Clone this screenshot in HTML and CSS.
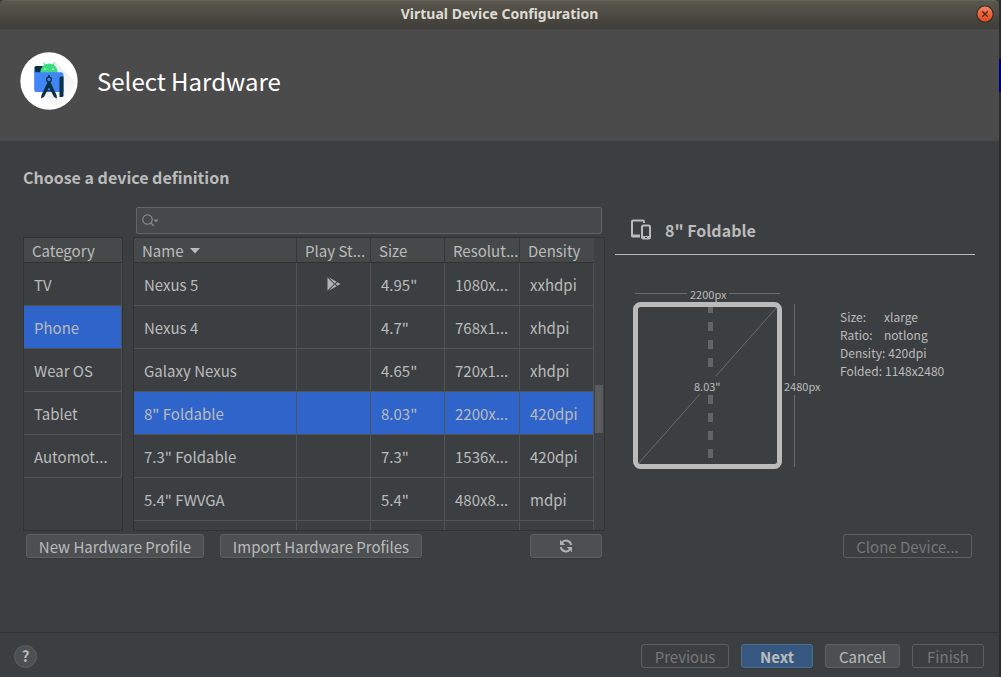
FILE: index.html
```html
<!DOCTYPE html>
<html lang="en">
<head>
<meta charset="utf-8">
<title>Virtual Device Configuration</title>
<link rel="stylesheet" href="styles.css">
</head>
<body>
<div class="desktop">
  <div class="window">
    <header class="titlebar">
      <h1 class="titlebar-text">Virtual Device Configuration</h1>
      <button class="close" type="button" aria-label="Close">
        <svg width="18" height="18" viewBox="0 0 18 18">
          <defs><linearGradient id="closeFill" x1="0" y1="0" x2="0" y2="1"><stop offset="0" stop-color="#f58a6c"/><stop offset=".5" stop-color="#ee6138"/><stop offset="1" stop-color="#e04a1a"/></linearGradient></defs>
          <circle cx="9" cy="9" r="8.2" fill="url(#closeFill)" stroke="#35322c" stroke-width="1.2"/>
          <path d="M6.2 6.2l5.6 5.6M11.8 6.2l-5.6 5.6" stroke="#4d2a1c" stroke-width="1.3"/>
        </svg>
      </button>
    </header>

    <div class="banner">
      <svg class="logo" width="58" height="58" viewBox="0 0 58 58" aria-hidden="true">
        <defs><linearGradient id="shade" x1="0" y1="0" x2="1" y2="1"><stop offset="0" stop-color="#d8d8d8"/><stop offset="1" stop-color="#fff"/></linearGradient></defs>
        <circle cx="29" cy="29" r="28.7" fill="#fff"/>
        <path d="M35 10l20 19a29 29 0 0 1-20 26L22 42z" fill="url(#shade)" opacity=".7"/>
        <path d="M16 14h8v8h-9.500v-6.500q0-1.500 1.500-1.500z" fill="#073042"/>
        <path d="M20 21q1-9 9-9.500q8 .5 9 9.500z" fill="#3ddc84"/>
        <path d="M25.300 14l-1.800-3.600M32.700 14l1.800-3.600" stroke="#3ddc84" stroke-width="1"/>
        <circle cx="25" cy="17.300" r=".8" fill="#fff"/><circle cx="33" cy="17.300" r=".8" fill="#fff"/>
        <path d="M14.200 17.500q.5 2.500 3 2.700H41q2.500.2 2.500 3V40H16q-1.800 0-1.800-2z" fill="#4285f4"/>
        <path d="M39.500 26q0-1.500 1.700-1.500h2.300V43.500q0 1.500-1.700 1.500h-2.300z" fill="#073042"/>
        <path d="M28 30.500l-6 13-.2 2 1.700-1L29 34l5.500 10.500 1.700 1-.2-2-6-13z" fill="#073042" stroke="#073042" stroke-width="1.200"/>
        <path d="M26 38q3 2 6 0" fill="none" stroke="#073042" stroke-width="1.200"/>
        <circle cx="29" cy="27.500" r="2.400" fill="#4285f4" stroke="#073042" stroke-width="1.300"/>
        <path d="M29 23v2.500" stroke="#073042" stroke-width="1.600"/>
      </svg>
      <h2 class="banner-title">Select Hardware</h2>
    </div>

    <main class="content">
      <h3 class="section-title">Choose a device definition</h3>
      <div class="columns">
        <section class="chooser">
          <div class="search">
            <svg width="18" height="14" viewBox="0 0 18 14" aria-hidden="true">
              <circle cx="5.500" cy="5.500" r="4.700" fill="none" stroke="#80898f" stroke-width="1.200"/>
              <path d="M8.700 8.700l3 3" stroke="#80898f" stroke-width="1.600"/>
              <path d="M11.500 5.500h5l-2.500 3z" fill="#80898f"/>
            </svg>
            <input class="search-input" type="text" aria-label="Search devices">
          </div>
          <div class="tables">
            <div class="pane category">
              <table class="grid">
                <thead><tr><th>Category</th></tr></thead>
                <tbody>
                  <tr><td>TV</td></tr>
                  <tr class="selected"><td>Phone</td></tr>
                  <tr><td>Wear OS</td></tr>
                  <tr><td>Tablet</td></tr>
                  <tr><td>Automot...</td></tr>
                </tbody>
              </table>
            </div>
            <div class="pane devices">
              <table class="grid">
                <colgroup><col><col class="c-play"><col class="c-size"><col class="c-res"><col class="c-den"></colgroup>
                <thead><tr>
                  <th>Name <svg class="sort" width="10" height="6" viewBox="0 0 10 6" aria-hidden="true"><path d="M0 0h10L5 5.500z" fill="#bbb"/></svg></th>
                  <th>Play St...</th><th>Size</th><th>Resolut...</th><th>Density</th>
                </tr></thead>
                <tbody>
                  <tr><td>Nexus 5</td><td class="play"><svg width="14" height="14" viewBox="0 0 14 14" role="img" aria-label="Play Store"><path d="M.5.5L7 7 .5 13.500z" fill="#afb1b3"/><path d="M1.800.3L9.600 4.700 7.700 6.500zM1.800 13.700L9.600 9.300 7.700 7.500zM10.400 5.200L13.500 7l-3.100 1.800L8.500 7z" fill="#afb1b3"/></svg></td><td>4.95"</td><td>1080x...</td><td>xxhdpi</td></tr>
                  <tr><td>Nexus 4</td><td></td><td>4.7"</td><td>768x1...</td><td>xhdpi</td></tr>
                  <tr><td>Galaxy Nexus</td><td></td><td>4.65"</td><td>720x1...</td><td>xhdpi</td></tr>
                  <tr class="selected"><td>8" Foldable</td><td></td><td>8.03"</td><td>2200x...</td><td>420dpi</td></tr>
                  <tr><td>7.3" Foldable</td><td></td><td>7.3"</td><td>1536x...</td><td>420dpi</td></tr>
                  <tr><td>5.4" FWVGA</td><td></td><td>5.4"</td><td>480x8...</td><td>mdpi</td></tr>
                  <tr><td></td><td></td><td></td><td></td><td></td></tr>
                </tbody>
              </table>
              <div class="scrollbar"><div class="thumb"></div></div>
            </div>
          </div>
          <div class="actions">
            <button class="btn w-new" type="button">New Hardware Profile</button>
            <button class="btn w-import" type="button">Import Hardware Profiles</button>
            <button class="btn refresh" type="button" aria-label="Refresh">
              <svg width="14" height="14" viewBox="0 0 14 14"><g fill="none" stroke="#afb1b3" stroke-width="2"><path d="M2.800 3.800A5.200 5.200 0 0 1 12.200 6"/><path d="M11.200 10.200A5.200 5.200 0 0 1 1.800 8"/></g><path d="M1 .8V6H6.200zM13 13.200V8H7.800z" fill="#afb1b3"/></svg>
            </button>
          </div>
        </section>

        <section class="details">
          <h4 class="device-title">
            <svg width="22" height="22" viewBox="0 0 22 22" aria-hidden="true"><g fill="none" stroke="#bbb" stroke-width="2"><path d="M13 4V2.500Q13 1.500 12 1.500H2Q1 1.500 1 2.500V16"/><rect x="11" y="6.500" width="8" height="13" rx="1.500"/></g><path d="M0 15.500h9V18.500H1.500Q0 18.500 0 17z" fill="#bbb"/><path d="M11 17h8v3h-8z" fill="#bbb"/><path d="M14 18h2v1h-2z" fill="#3c3f41"/></svg>
            <span>8" Foldable</span>
          </h4>
          <div class="device-info">
            <svg class="diagram" width="215" height="190" viewBox="0 0 215 190" role="img" aria-label="Device dimensions">
              <g stroke="#696b6c" fill="none">
                <path d="M20 8.500h52M114 8.500h51M179.500 19v72M179.500 110v72"/>
                <path d="M23 179l62-70M101 91l61-69"/>
              </g>
              <path d="M95.500 22v174" stroke="#646464" stroke-width="5" stroke-dasharray="6 9 9 9 9 9 9 28 9 9 9 9 9 9 9 100"/>
              <rect x="20.500" y="19.500" width="144" height="162" rx="5" fill="none" stroke="#bbb" stroke-width="5"/>
              <g class="dims"><text x="75" y="14">2200px</text><text x="79" y="106">8.03"</text><text x="169" y="106">2480px</text></g>
            </svg>
            <dl class="specs">
              <div><dt>Size:</dt><dd>xlarge</dd></div>
              <div><dt>Ratio:</dt><dd>notlong</dd></div>
              <div><dt>Density:</dt><dd>420dpi</dd></div>
              <div><dt>Folded:</dt><dd>1148x2480</dd></div>
            </dl>
          </div>
          <button class="btn clone" type="button" disabled>Clone Device...</button>
        </section>
      </div>
    </main>

    <footer class="footer">
      <button class="help" type="button" aria-label="Help">?</button>
      <div class="nav">
        <button class="btn w-prev" type="button" disabled>Previous</button>
        <button class="btn primary" type="button">Next</button>
        <button class="btn w-cancel" type="button">Cancel</button>
        <button class="btn" type="button" disabled>Finish</button>
      </div>
    </footer>
  </div>
  <div class="behind"><div class="behind-mark"></div></div>
</div>
</body>
</html>
```
FILE: styles.css
```css
* { box-sizing: border-box; }

body {
  margin: 0;
  background: #2b2b2b;
  color: #bbbbbb;
  font: 15px/24px "Noto Sans CJK SC", "Noto Sans", sans-serif;
}

h1, h2, h3, h4, dl, dd { margin: 0; }
button, input { font: inherit; color: inherit; }

.desktop { display: flex; height: 100vh; min-height: 560px; }
.window { flex: 1; min-width: 0; display: flex; flex-direction: column; background: #3c3f41; }
.behind { width: 2px; padding-top: 59px; background: #2b2b2b; }
.behind-mark { height: 33px; background: #000080; }

.titlebar {
  display: grid;
  grid-template-columns: 28px 1fr 28px;
  align-items: center;
  height: 29px;
  padding-bottom: 2px;
  border-top: 1px solid #66635a;
  border-radius: 5px 5px 0 0;
  background: linear-gradient(#5a574d, #3e3d38);
}
.titlebar-text {
  grid-column: 2;
  color: #dfdbd2;
  font: 700 14px/20px "Noto Sans", "Open Sans", sans-serif;
  text-align: center;
}
.close { display: flex; justify-self: center; width: 18px; height: 18px; padding: 0; border: 0; background: none; }

.banner {
  display: flex;
  align-items: center;
  gap: 19px;
  height: 112px;
  padding: 0 20px 8px;
  background: #4b4b4b;
}
.banner-title { color: #ffffff; font-size: 24px; font-weight: 400; line-height: 36px; }

.content {
  flex: 1;
  min-height: 0;
  display: flex;
  flex-direction: column;
  padding: 24px 24px 74px 23px;
}
.section-title { margin-bottom: 18px; font-size: 16px; font-weight: 700; line-height: 24px; }
.columns {
  flex: 1;
  min-height: 0;
  display: grid;
  grid-template-columns: minmax(0, 1fr) 360px;
  gap: 10px;
}

.chooser { display: flex; flex-direction: column; gap: 3px; min-height: 0; }
.search {
  display: flex;
  align-items: center;
  gap: 4px;
  height: 27px;
  margin: 0 3px 0 113px;
  padding: 0 5px;
  border: 1px solid #646464;
  border-radius: 2px;
  background: #45494a;
}
.search-input { flex: 1; min-width: 0; height: 23px; padding: 0; border: 0; outline: 0; background: transparent; }

.tables { flex: 1; min-height: 0; display: flex; gap: 10px; }
.pane { display: flex; overflow: hidden; border: 1px solid #323232; }
.category { width: 100px; }
.devices { flex: 1; min-width: 0; }
.grid { flex: 1; min-width: 0; width: 100%; align-self: flex-start; table-layout: fixed; border-spacing: 0; }
.grid th {
  height: 25px;
  padding: 2px 0 0 8px;
  border-right: 1px solid #36393a;
  border-bottom: 1px solid #323232;
  background: #45494a;
  font-weight: 400;
  line-height: 22px;
  text-align: left;
  white-space: nowrap;
}
.grid th:last-child { border-right-color: #45494a; }
.grid td {
  height: 43px;
  padding: 1px 0 0 10px;
  border-right: 1px solid #515354;
  border-bottom: 1px solid #515354;
  white-space: nowrap;
}
.grid .selected td { background: #2f65ca; background-clip: padding-box; }
.grid .play { padding: 0; text-align: center; }
.play svg { display: block; margin: 0 auto; }
.sort { margin-left: 3px; vertical-align: 3px; }
.c-play, .c-size, .c-den { width: 74px; }
.c-res { width: 75px; }
.scrollbar { width: 10px; padding: 147px 1px 0; background: #3f4244; }
.thumb { height: 48px; background: #595b5d; }

.actions { display: flex; gap: 16px; padding: 0 3px; }
.btn {
  display: flex;
  align-items: center;
  justify-content: center;
  width: 72px;
  height: 24px;
  padding: 2px 0 0;
  border: 1px solid #5e6060;
  border-radius: 3px;
  background: #4c5052;
  box-shadow: 0 1px 0 #36393a;
  line-height: 20px;
  white-space: nowrap;
}
.btn:disabled { background: transparent; box-shadow: none; color: #777777; }
.primary { border-color: #4c708c; background: #365880; font-weight: 700; }
.w-new { width: 178px; }
.w-import { width: 202px; }
.w-prev { width: 88px; }
.w-cancel { width: 75px; }
.refresh { margin-left: auto; padding: 0; }

.details { display: flex; flex-direction: column; }
.device-title {
  display: flex;
  align-items: center;
  gap: 12px;
  height: 48px;
  padding: 0 0 2px 16px;
  border-bottom: 1px solid #bbbbbb;
  font-size: 16px;
  font-weight: 700;
}
.device-info { display: flex; gap: 10px; margin-top: 30px; }
.dims { fill: #bbbbbb; font-size: 11px; }
.specs { padding-top: 23px; font-size: 12px; line-height: 18px; }
.specs div { display: flex; }
.specs dt { min-width: 44px; padding-right: 3px; }
.clone { width: 129px; margin: auto 3px 0 auto; }

.footer {
  display: flex;
  align-items: center;
  justify-content: space-between;
  height: 45px;
  padding: 2px 15px 0 14px;
  border-top: 1px solid #323232;
}
.help {
  width: 23px;
  height: 23px;
  padding: 0;
  border: 1px solid #5e6060;
  border-radius: 50%;
  background: #4c5052;
  font-weight: 700;
  line-height: 20px;
}
.nav { display: flex; gap: 12px; }
```
